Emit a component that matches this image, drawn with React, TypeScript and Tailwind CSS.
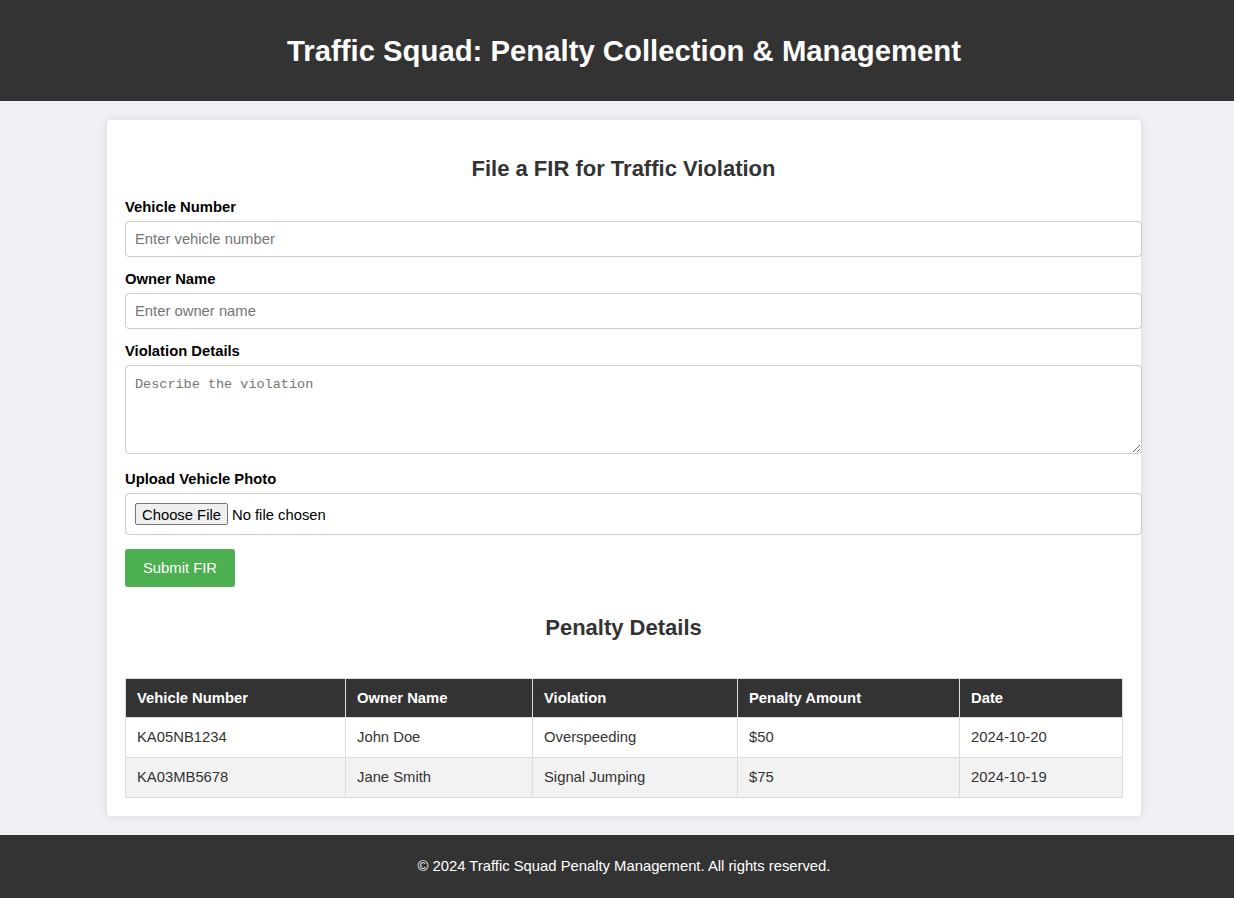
import React from 'react';

const rows = [
    { vehicle: 'KA05NB1234', owner: 'John Doe', violation: 'Overspeeding', amount: '$50', date: '2024-10-20' },
    { vehicle: 'KA03MB5678', owner: 'Jane Smith', violation: 'Signal Jumping', amount: '$75', date: '2024-10-19' },
];

const columns = [
    { label: 'Vehicle Number', width: 'w-[220px]' },
    { label: 'Owner Name', width: 'w-[187px]' },
    { label: 'Violation', width: 'w-[205px]' },
    { label: 'Penalty Amount', width: 'w-[222px]' },
    { label: 'Date', width: 'w-[163px]' },
];

const labelCls = 'block text-[14.8px] font-bold leading-[17px] mb-[5px] text-black';
const inputCls =
    'block w-[1017px] h-[36px] border border-[#ccc] rounded-[4px] px-[9px] text-[14.8px] text-[#333] placeholder:text-[#757575] outline-none';

export default function App() {
    return (
        <div className="min-h-screen bg-[#f0f1f5] font-['Liberation_Sans',Arial,sans-serif] text-[#333]">
            <header className="h-[101px] bg-[#333] flex items-center justify-center pl-[14px]">
                <h1 className="text-[29.3px] font-bold text-white leading-[33px]">
                    Traffic Squad: Penalty Collection &amp; Management
                </h1>
            </header>

            <main className="mt-[19px] ml-[107px] w-[1034px] bg-white rounded-[4px] shadow-[0_0_10px_rgba(0,0,0,0.1)] pt-[18px] pb-[18px] pl-[18px] pr-[19px]">
                <h2 className="mt-[18px] mb-[18px] text-[22px] font-bold text-center leading-[25px] text-[#333]">
                    File a FIR for Traffic Violation
                </h2>

                <form onSubmit={(e) => e.preventDefault()}>
                    <label className={labelCls}>Vehicle Number</label>
                    <input type="text" placeholder="Enter vehicle number" className={`${inputCls} mb-[14px]`} />

                    <label className={labelCls}>Owner Name</label>
                    <input type="text" placeholder="Enter owner name" className={`${inputCls} mb-[14px]`} />

                    <label className={labelCls}>Violation Details</label>
                    <textarea
                        placeholder="Describe the violation"
                        className="block w-[1017px] h-[89px] border border-[#ccc] rounded-[4px] px-[9px] pt-[11px] pb-[9px] font-['Liberation_Mono',monospace] text-[13.5px] leading-[16px] placeholder:text-[#757575] outline-none mb-[17px]"
                    />

                    <label className={labelCls}>Upload Vehicle Photo</label>
                    <input
                        type="file"
                        className="block w-[1017px] h-[42px] border border-[#ccc] rounded-[4px] px-[9px] py-[9px] text-[14.8px] leading-[22px] text-black file:h-[22px] file:px-[6px] file:mr-[4px] file:border file:border-[#767676] file:rounded-[2px] file:bg-[#efefef] file:text-black file:text-[14.8px] mb-[14px]"
                    />

                    <button
                        type="submit"
                        className="block h-[38px] w-[110px] bg-[#4caf50] text-white text-[14.8px] rounded-[3px]"
                    >
                        Submit FIR
                    </button>
                </form>

                <h2 className="mt-[28px] mb-[38px] text-[22px] font-bold text-center leading-[25px] text-[#333]">
                    Penalty Details
                </h2>

                <table className="w-[997px] border-collapse text-[14.8px] table-fixed">
                    <thead>
                        <tr className="bg-[#333] text-white h-[39px]">
                            {columns.map((col) => (
                                <th key={col.label} className={`${col.width} border border-[#ddd] px-[11px] text-left font-bold`}>
                                    {col.label}
                                </th>
                            ))}
                        </tr>
                    </thead>
                    <tbody>
                        {rows.map((row, i) => (
                            <tr key={row.vehicle} className={`h-[40px] ${i % 2 === 1 ? 'bg-[#f2f2f2]' : 'bg-white'}`}>
                                <td className="border border-[#ddd] px-[11px]">{row.vehicle}</td>
                                <td className="border border-[#ddd] px-[11px]">{row.owner}</td>
                                <td className="border border-[#ddd] px-[11px]">{row.violation}</td>
                                <td className="border border-[#ddd] px-[11px]">{row.amount}</td>
                                <td className="border border-[#ddd] px-[11px]">{row.date}</td>
                            </tr>
                        ))}
                    </tbody>
                </table>
            </main>

            <footer className="mt-[19px] h-[63px] bg-[#333] flex items-center justify-center pl-[14px]">
                <p className="text-white text-[14.8px]">© 2024 Traffic Squad Penalty Management. All rights reserved.</p>
            </footer>
        </div>
    );
}
